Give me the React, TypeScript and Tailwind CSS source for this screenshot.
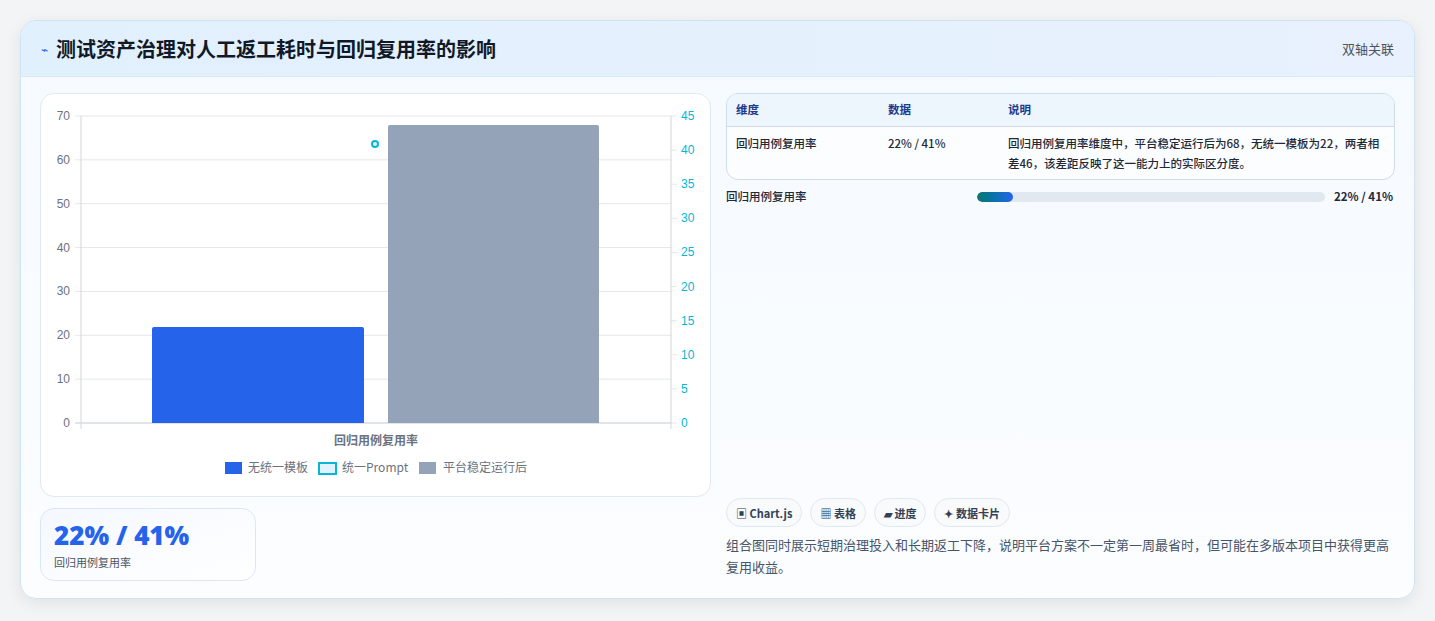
import React from "react";

const F = { fontFamily: '"Noto Sans CJK SC", "Noto Sans", sans-serif' };

function Chart() {
  const ox = 40, oy = 93;
  const X = (x: number) => x - ox;
  const Y = (y: number) => y - oy;
  const y0 = 422, top = 115, h = y0 - top;
  const L = [0, 10, 20, 30, 40, 50, 60, 70];
  const R = [0, 5, 10, 15, 20, 25, 30, 35, 40, 45];
  return (
    <svg width="670" height="403" className="block" style={{ fontFamily: '"Liberation Sans", Arial, sans-serif' }}>
      {L.map((v) => {
        const y = Y(y0 - (v / 70) * h);
        return (
          <g key={v}>
            <line x1={X(74)} x2={X(670)} y1={y} y2={y} stroke="#e5e7eb" />
            <text x={X(69)} y={y + 4} textAnchor="end" fontSize="12" fill="#6b7280">{v}</text>
          </g>
        );
      })}
      {R.map((v) => {
        const y = Y(y0 - (v / 45) * h);
        return (
          <g key={v}>
            <line x1={X(670)} x2={X(676)} y1={y} y2={y} stroke="#e5e7eb" />
            <text x={X(680)} y={y + 4} fontSize="12" fill="#06b6d4">{v}</text>
          </g>
        );
      })}
      <line x1={X(80)} x2={X(80)} y1={Y(top)} y2={Y(428)} stroke="#d1d5db" />
      <line x1={X(670)} x2={X(670)} y1={Y(top)} y2={Y(428)} stroke="#d1d5db" />
      <line x1={X(74)} x2={X(670)} y1={Y(y0)} y2={Y(y0)} stroke="#d1d5db" />
      <path d={`M${X(151)} ${Y(y0)} V${Y(328)} q0 -2 2 -2 H${X(361)} q2 0 2 2 V${Y(y0)} Z`} fill="#2563eb" />
      <path d={`M${X(387)} ${Y(y0)} V${Y(126)} q0 -2 2 -2 H${X(596)} q2 0 2 2 V${Y(y0)} Z`} fill="#94a3b8" />
      <circle cx={X(374)} cy={Y(143)} r="3" fill="#e0f2fe" stroke="#06b6d4" strokeWidth="2" />
      <text x={X(375)} y={Y(444)} textAnchor="middle" fontSize="12" fontWeight="bold" fill="#6b7280" style={F}>回归用例复用率</text>
      <rect x={X(224)} y={Y(461)} width="17" height="12" fill="#2563eb" />
      <text x={X(247)} y={Y(471)} fontSize="12" fill="#6b7280" style={F}>无统一模板</text>
      <rect x={X(318)} y={Y(462)} width="17" height="11" fill="#e0f2fe" stroke="#06b6d4" strokeWidth="2" />
      <text x={X(341)} y={Y(471)} fontSize="12" fill="#6b7280" style={F}>统一Prompt</text>
      <rect x={X(418)} y={Y(461)} width="17" height="12" fill="#94a3b8" />
      <text x={X(442)} y={Y(471)} fontSize="12" fill="#6b7280" style={F}>平台稳定运行后</text>
    </svg>
  );
}

export default function App() {
  return (
    <div className="w-[1435px] h-[621px] bg-[#f3f4f6] pt-[20px] pl-[20px]" style={F}>
      <div className="w-[1395px] h-[579px] rounded-[16px] border border-[#cfe3f3] bg-gradient-to-b from-[#f5faff] to-[#fbfdff] shadow-[0_4px_16px_rgba(0,0,0,0.08)] overflow-hidden flex flex-col">
        <div className="h-[56px] flex items-center justify-between px-[20px] bg-gradient-to-r from-[#e1f0fd] to-[#e8f1fd] border-b border-[#d7e8f7]">
          <div className="flex items-center gap-[8px]">
            <span className="text-[#2563eb] text-[12px]">⌁</span>
            <span className="text-[20px] font-bold text-[#111827]">测试资产治理对人工返工耗时与回归复用率的影响</span>
          </div>
          <span className="text-[13px] text-[#4b5563]">双轴关联</span>
        </div>
        <div className="flex gap-[15px] px-[19px] pt-[16px]">
          <div className="w-[671px] flex flex-col gap-[11px]">
            <div className="h-[404px] rounded-[14px] border border-[#e2e8f0] bg-white overflow-hidden">
              <Chart />
            </div>
            <div className="w-[216px] h-[73px] rounded-[14px] border border-[#dbe7f5] bg-gradient-to-br from-[#f4f8ff] to-white px-[13px] pt-[9px]">
              <div className="text-[26px] leading-[34px] font-black text-[#2563eb]" style={{ fontFamily: '"Noto Sans", sans-serif' }}>22% / 41%</div>
              <div className="text-[11px] text-[#4b5563] mt-[2px]">回归用例复用率</div>
            </div>
          </div>
          <div className="w-[671px] flex flex-col">
            <div className="rounded-[12px] border border-[#cfdbe8] bg-white/60 overflow-hidden text-[11.5px] font-medium">
              <div className="flex h-[33px] items-center bg-[#edf5fd] border-b border-[#cfdbe8] text-[#1e3a8a] font-bold">
                <div className="w-[161px] pl-[9px]">维度</div>
                <div className="w-[120px]">数据</div>
                <div className="flex-1">说明</div>
              </div>
              <div className="flex py-[6px] text-[#1f2937] leading-[20px]">
                <div className="w-[161px] pl-[9px]">回归用例复用率</div>
                <div className="w-[120px]">22% / 41%</div>
                <div className="flex-1 pr-[12px]">回归用例复用率维度中，平台稳定运行后为68，无统一模板为22，两者相差46，该差距反映了这一能力上的实际区分度。</div>
              </div>
            </div>
            <div className="flex items-center mt-[8px] text-[11.5px] font-medium text-[#1f2937]">
              <div className="w-[251px]">回归用例复用率</div>
              <div className="w-[348px] h-[10px] rounded-full bg-[#e2e8f0] overflow-hidden">
                <div className="h-full w-[36px] rounded-full bg-gradient-to-r from-[#0f766e] to-[#2563eb]" />
              </div>
              <div className="flex-1 text-right font-bold pr-[2px]">22% / 41%</div>
            </div>
            <div className="mt-[293px] flex gap-[8px] text-[11px] font-bold text-[#334155]">
              {["▣ Chart.js", "▦ 表格", "▰ 进度", "✦ 数据卡片"].map((t) => (
                <div key={t} className="h-[29px] px-[9px] flex items-center rounded-full border border-[#e2e8f0] bg-[#f8fafc]">{t}</div>
              ))}
            </div>
            <div className="mt-[7px] text-[13px] leading-[22px] text-[#475569]">组合图同时展示短期治理投入和长期返工下降，说明平台方案不一定第一周最省时，但可能在多版本项目中获得更高复用收益。</div>
          </div>
        </div>
      </div>
    </div>
  );
}
